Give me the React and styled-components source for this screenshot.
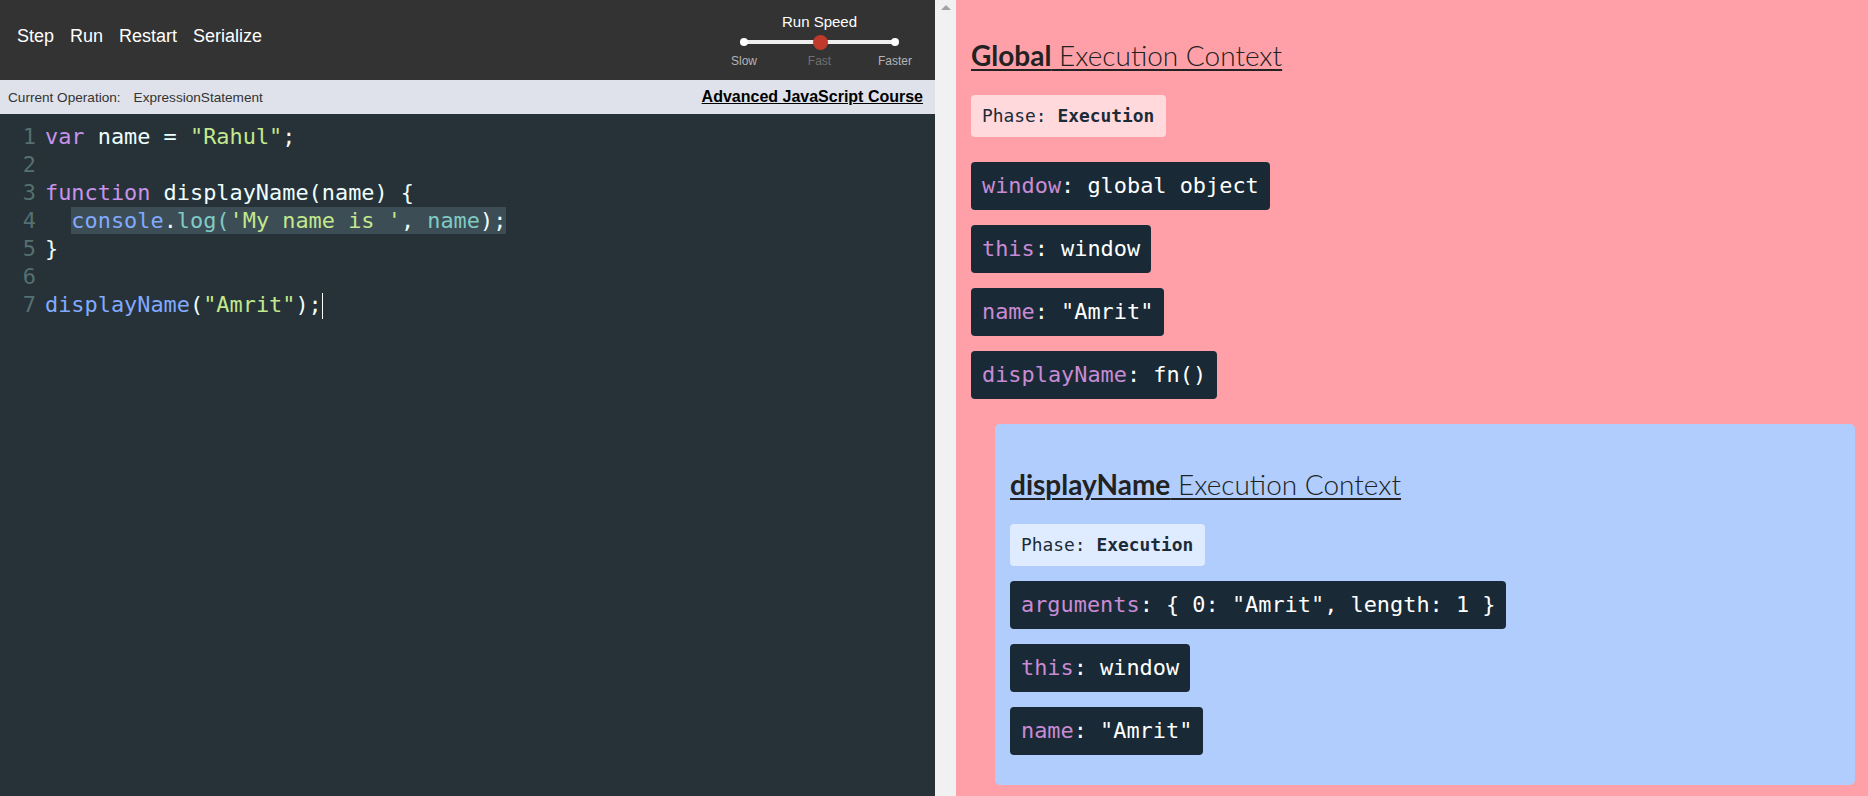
import styled, { createGlobalStyle } from "styled-components";

const GlobalStyle = createGlobalStyle`
  html, body {
    margin: 0;
    padding: 0;
    height: 100%;
    overflow: hidden;
  }
  #root {
    height: 100%;
  }
`;

const Layout = styled.div`
  display: flex;
  height: 100vh;
  font-family: "Liberation Sans", Arial, sans-serif;
`;

const LeftPane = styled.div`
  width: 935px;
  display: flex;
  flex-direction: column;
  background-color: #263238;
`;

const TopBar = styled.div`
  height: 80px;
  background-color: #333333;
  display: flex;
  align-items: center;
  justify-content: space-between;
  padding: 0 10px 0 17px;
  box-sizing: border-box;
`;

const Controls = styled.div`
  display: flex;
  gap: 16px;
  margin-top: -8px;
`;

const ControlButton = styled.button`
  background: none;
  border: none;
  padding: 0;
  color: #fff;
  font-family: "Liberation Sans", Arial, sans-serif;
  font-size: 18px;
  cursor: pointer;
`;

const SpeedControl = styled.div`
  display: flex;
  flex-direction: column;
  align-items: center;
  width: 211px;
  align-self: flex-start;
`;

const SpeedTitle = styled.div`
  color: #fff;
  font-size: 15px;
  line-height: 18px;
  margin-top: 13px;
`;

const SliderTrack = styled.div`
  position: relative;
  width: 151px;
  height: 16px;
  margin-top: 3px;
  display: flex;
  align-items: center;
  justify-content: space-between;
  &::before {
    content: "";
    position: absolute;
    left: 0;
    right: 0;
    top: 6px;
    height: 4px;
    background: #eeeeee;
  }
`;

const SliderDot = styled.span`
  position: relative;
  width: 8px;
  height: 8px;
  margin: 0 -4px;
  border-radius: 50%;
  background: #ffffff;
`;

const SliderThumb = styled.span`
  position: absolute;
  left: 50%;
  top: 1px;
  width: 15px;
  height: 15px;
  margin-left: -7px;
  border-radius: 50%;
  background: #c0392b;
`;

const SpeedLabels = styled.div`
  display: grid;
  grid-template-columns: repeat(3, 60px);
  column-gap: 15.5px;
  margin-top: 4px;
`;

const SpeedLabel = styled.span`
  text-align: center;
  font-size: 12px;
  color: ${(p) => (p.$active ? "#6f6f6f" : "#b4b4b4")};
`;

const OpBar = styled.div`
  height: 34px;
  background-color: #dfe2ea;
  display: flex;
  align-items: center;
  justify-content: space-between;
  padding: 0 12px 0 8px;
  box-sizing: border-box;
`;

const OpInfo = styled.div`
  display: flex;
  gap: 13px;
  font-size: 13.6px;
  color: #333;
`;

const CourseLink = styled.a`
  font-size: 16px;
  font-weight: bold;
  color: #000;
  text-decoration: underline;
`;

const Editor = styled.div`
  flex: 1;
  padding-top: 9px;
  font-family: "DejaVu Sans Mono", monospace;
  font-size: 21.9px;
  color: #eeffff;
`;

const CodeLine = styled.div`
  display: flex;
  height: 28px;
  line-height: 28px;
`;

const LineNo = styled.span`
  width: 36px;
  text-align: right;
  color: #557070;
`;

const CodeText = styled.span`
  padding-left: 9px;
  white-space: pre;
`;

const Tok = styled.span`
  color: ${(p) => p.$c};
`;

const Marked = styled.span`
  background-color: #3c4d56;
  padding: 1px 0;
`;

const Cursor = styled.span`
  display: inline-block;
  width: 1px;
  height: 26px;
  vertical-align: middle;
  background: #fff;
`;

const ScrollStrip = styled.div`
  width: 21px;
  background-color: #f1f1f1;
  display: flex;
  justify-content: center;
  padding-top: 5px;
  box-sizing: border-box;
`;

const ScrollArrow = styled.span`
  width: 0;
  height: 0;
  border-left: 5px solid transparent;
  border-right: 5px solid transparent;
  border-bottom: 5px solid #a3a3a3;
`;

const RightPane = styled.div`
  flex: 1;
  background-color: #ffa0a8;
  padding: 0 13px 0 15px;
  overflow: hidden;
`;

const ContextBox = styled.div`
  display: flex;
  flex-direction: column;
  align-items: flex-start;
  ${(p) =>
    p.$nested &&
    `
    align-self: stretch;
    background-color: #b0cdfd;
    border-radius: 5px;
    margin: 25px 0 0 24px;
    padding: 5px 15px 30px;
  `}
`;

const Title = styled.h2`
  margin: 38px 0 0;
  font-family: Lato, "Liberation Sans", sans-serif;
  font-size: 28px;
  font-weight: 300;
  line-height: 34px;
  color: #222;
  text-decoration: underline;
  text-decoration-thickness: 2px;
  text-underline-offset: 3px;
`;

const TitleName = styled.strong`
  font-weight: 700;
`;

const Phase = styled.div`
  margin-top: 23px;
  height: 42px;
  line-height: 42px;
  padding: 0 12px 0 11px;
  border-radius: 4px;
  background-color: rgba(255, 255, 255, 0.6);
  font-family: "DejaVu Sans Mono", monospace;
  font-size: 17.9px;
  color: #1b2b37;
`;

const VarList = styled.div`
  display: flex;
  flex-direction: column;
  align-items: flex-start;
  gap: 15px;
  margin-top: ${(p) => p.$gap}px;
`;

const VarCard = styled.div`
  height: 48px;
  line-height: 48px;
  padding: 0 11px;
  border-radius: 4px;
  background-color: #192a36;
  font-family: "DejaVu Sans Mono", monospace;
  font-size: 21.9px;
  color: #ffffff;
  white-space: pre;
`;

const VarKey = styled.span`
  color: #c98bd3;
`;

const C = {
  kw: "#c792ea",
  plain: "#eeffff",
  str: "#c3e88d",
  fn: "#82aaff",
  teal: "#80cbc4",
};

const code = [
  [["var", C.kw], [" name = ", C.plain], ['"Rahul"', C.str], [";", C.plain]],
  [],
  [["function", C.kw], [" displayName(name) {", C.plain]],
  "marked",
  [["}", C.plain]],
  [],
  [["displayName", C.fn], ["(", C.plain], ['"Amrit"', C.str], [");", C.plain]],
];

const markedLine = [
  ["console", C.fn],
  [".", C.plain],
  ["log(", C.teal],
  ["'My name is '", C.str],
  [", ", C.plain],
  ["name", C.teal],
  [");", C.plain],
];

const globalContext = {
  name: "Global",
  phase: "Execution",
  gap: 25,
  vars: [
    ["window", "global object"],
    ["this", "window"],
    ["name", '"Amrit"'],
    ["displayName", "fn()"],
  ],
  child: {
    name: "displayName",
    phase: "Execution",
    gap: 15,
    vars: [
      ["arguments", '{ 0: "Amrit", length: 1 }'],
      ["this", "window"],
      ["name", '"Amrit"'],
    ],
  },
};

const renderTokens = (tokens) =>
  tokens.map(([text, color], i) => (
    <Tok key={i} $c={color}>
      {text}
    </Tok>
  ));

// one execution context, children are drawn inside it
const Context = ({ ctx, nested }) => (
  <ContextBox $nested={nested}>
    <Title>
      <TitleName>{ctx.name}</TitleName> Execution Context
    </Title>
    <Phase>
      Phase: <b>{ctx.phase}</b>
    </Phase>
    <VarList $gap={ctx.gap}>
      {ctx.vars.map(([k, v]) => (
        <VarCard key={k}>
          <VarKey>{k}</VarKey>: {v}
        </VarCard>
      ))}
    </VarList>
    {ctx.child && <Context ctx={ctx.child} nested />}
  </ContextBox>
);

const App = () => {
  return (
    <>
      <GlobalStyle />
      <Layout>
        <LeftPane>
          <TopBar>
            <Controls>
              <ControlButton>Step</ControlButton>
              <ControlButton>Run</ControlButton>
              <ControlButton>Restart</ControlButton>
              <ControlButton>Serialize</ControlButton>
            </Controls>
            <SpeedControl>
              <SpeedTitle>Run Speed</SpeedTitle>
              <SliderTrack>
                <SliderDot />
                <SliderDot />
                <SliderThumb />
              </SliderTrack>
              <SpeedLabels>
                <SpeedLabel>Slow</SpeedLabel>
                <SpeedLabel $active>Fast</SpeedLabel>
                <SpeedLabel>Faster</SpeedLabel>
              </SpeedLabels>
            </SpeedControl>
          </TopBar>
          <OpBar>
            <OpInfo>
              <span>Current Operation:</span>
              <span>ExpressionStatement</span>
            </OpInfo>
            <CourseLink href="#">Advanced JavaScript Course</CourseLink>
          </OpBar>
          <Editor>
            {code.map((line, i) => (
              <CodeLine key={i}>
                <LineNo>{i + 1}</LineNo>
                <CodeText>
                  {line === "marked" ? (
                    <>
                      {"  "}
                      <Marked>{renderTokens(markedLine)}</Marked>
                    </>
                  ) : (
                    renderTokens(line)
                  )}
                  {i === code.length - 1 && <Cursor />}
                </CodeText>
              </CodeLine>
            ))}
          </Editor>
        </LeftPane>
        <ScrollStrip>
          <ScrollArrow />
        </ScrollStrip>
        <RightPane>
          <Context ctx={globalContext} />
        </RightPane>
      </Layout>
    </>
  );
};

export default App;
